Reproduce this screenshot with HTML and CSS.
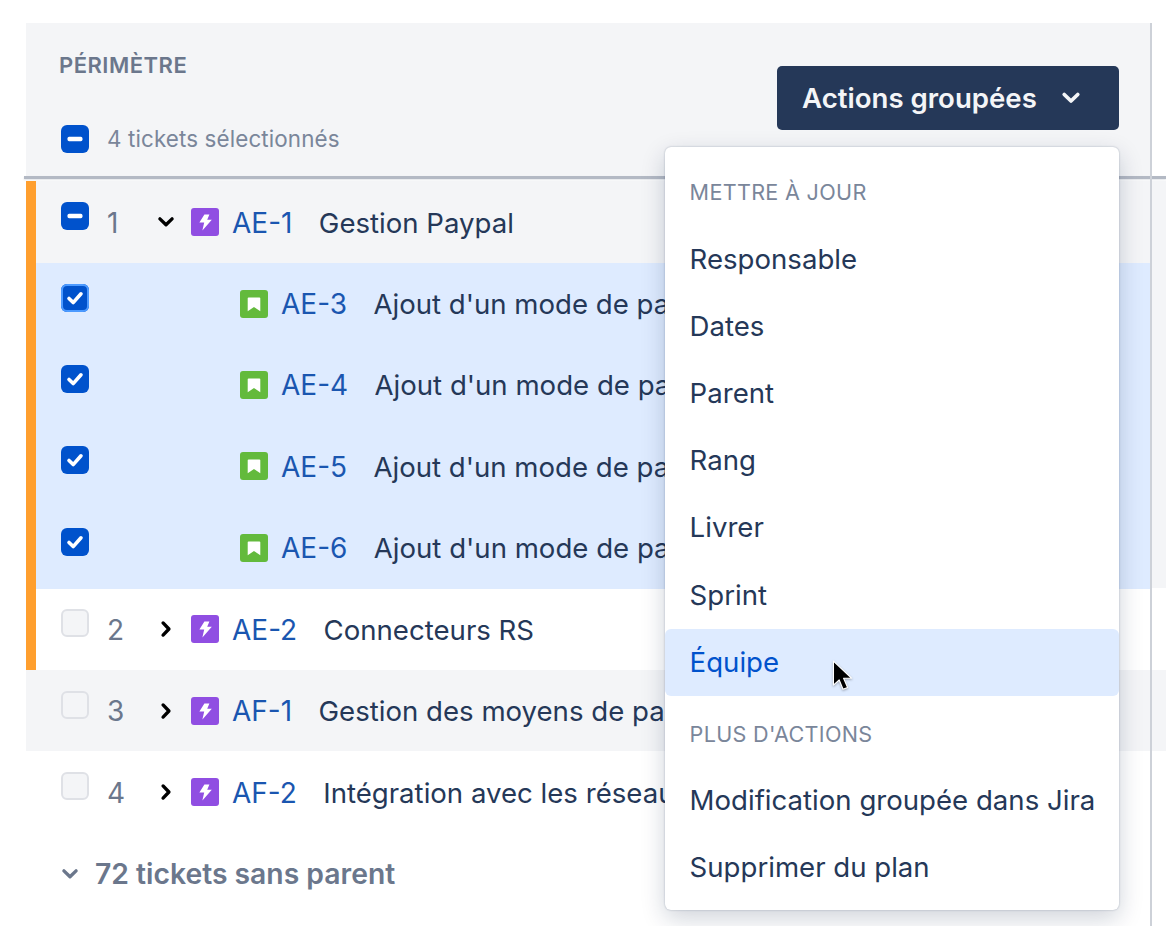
FILE: index.html
```html
<!DOCTYPE html>
<html lang="fr">
<head>
<meta charset="utf-8">
<title>Périmètre</title>
<link rel="stylesheet" href="styles.css">
</head>
<body>
<svg class="defs" width="0" height="0" aria-hidden="true">
  <symbol id="epic" viewBox="0 0 28 28"><rect width="28" height="28" rx="3" fill="#904ee2"/><path d="M13.4 6.4h5l-2.2 5.4h4.6L11.4 22.4l1.8-7.8H8.4z" fill="#fff"/></symbol>
  <symbol id="story" viewBox="0 0 28 28"><rect width="28" height="28" rx="3" fill="#63ba3c"/><path d="M8.6 7.4h10.8a.9.9 0 0 1 .9.9v13l-6.3-4.2-6.3 4.2v-13a.9.9 0 0 1 .9-.9z" fill="#fff"/></symbol>
  <symbol id="down" viewBox="0 0 16 16"><path d="M2.6 5.2 8 10.4l5.4-5.2" fill="none" stroke="currentColor" stroke-width="3" stroke-linecap="round" stroke-linejoin="round"/></symbol>
  <symbol id="right" viewBox="0 0 16 16"><path d="M5.4 2.6 10.6 8l-5.2 5.4" fill="none" stroke="currentColor" stroke-width="3" stroke-linecap="round" stroke-linejoin="round"/></symbol>
  <symbol id="check" viewBox="0 0 28 28"><path d="M8 14.4l4.2 4.2L20 9.8" fill="none" stroke="#fff" stroke-width="3.6" stroke-linecap="round" stroke-linejoin="round"/></symbol>
  <symbol id="dash" viewBox="0 0 28 28"><rect x="6.5" y="11.8" width="15" height="4.4" rx="1.6" fill="#fff"/></symbol>
</svg>

<main class="page">
  <section class="panel">
    <header class="head">
      <div class="head-left">
        <h2 class="title">PÉRIMÈTRE</h2>
        <div class="selected">
          <span class="box on"><svg><use href="#dash"/></svg></span>
          <span class="selected-text">4 tickets sélectionnés</span>
        </div>
      </div>
      <button class="bulk"><span>Actions groupées</span><svg class="bulk-chev"><use href="#down"/></svg></button>
    </header>
    <div class="rule"></div>

    <div class="rows">
      <div class="flag"></div>
      <div class="row grey">
        <span class="box on"><svg><use href="#dash"/></svg></span>
        <span class="num">1</span>
        <svg class="chev"><use href="#down"/></svg>
        <svg class="type"><use href="#epic"/></svg>
        <a class="key">AE-1</a><span class="name">Gestion Paypal</span>
      </div>
      <div class="row sel child">
        <span class="box on focus"><svg><use href="#check"/></svg></span>
        <svg class="type"><use href="#story"/></svg>
        <a class="key">AE-3</a><span class="name">Ajout d'un mode de pa</span>
      </div>
      <div class="row sel child">
        <span class="box on"><svg><use href="#check"/></svg></span>
        <svg class="type"><use href="#story"/></svg>
        <a class="key">AE-4</a><span class="name">Ajout d'un mode de pa</span>
      </div>
      <div class="row sel child">
        <span class="box on"><svg><use href="#check"/></svg></span>
        <svg class="type"><use href="#story"/></svg>
        <a class="key">AE-5</a><span class="name">Ajout d'un mode de pa</span>
      </div>
      <div class="row sel child">
        <span class="box on"><svg><use href="#check"/></svg></span>
        <svg class="type"><use href="#story"/></svg>
        <a class="key">AE-6</a><span class="name">Ajout d'un mode de pa</span>
      </div>
      <div class="row">
        <span class="box"></span>
        <span class="num">2</span>
        <svg class="chev"><use href="#right"/></svg>
        <svg class="type"><use href="#epic"/></svg>
        <a class="key">AE-2</a><span class="name">Connecteurs RS</span>
      </div>
      <div class="row grey wide">
        <span class="box"></span>
        <span class="num">3</span>
        <svg class="chev"><use href="#right"/></svg>
        <svg class="type"><use href="#epic"/></svg>
        <a class="key">AF-1</a><span class="name">Gestion des moyens de pa</span>
      </div>
      <div class="row">
        <span class="box"></span>
        <span class="num">4</span>
        <svg class="chev"><use href="#right"/></svg>
        <svg class="type"><use href="#epic"/></svg>
        <a class="key">AF-2</a><span class="name">Intégration avec les réseau</span>
      </div>
    </div>

    <div class="orphans">
      <svg class="orph-chev"><use href="#down"/></svg>
      <span>72 tickets sans parent</span>
    </div>
  </section>

  <nav class="menu">
    <div class="menu-label first">METTRE À JOUR</div>
    <div class="item">Responsable</div>
    <div class="item">Dates</div>
    <div class="item">Parent</div>
    <div class="item">Rang</div>
    <div class="item">Livrer</div>
    <div class="item">Sprint</div>
    <div class="item hover">Équipe</div>
    <div class="menu-label">PLUS D'ACTIONS</div>
    <div class="item">Modification groupée dans Jira</div>
    <div class="item">Supprimer du plan</div>
  </nav>

  <svg class="cursor" viewBox="0 0 24 34" aria-hidden="true"><path d="M1.5 1v25l6-5.4 4 9.8 4.8-2-4.2-9.6h8.4z" fill="#000" stroke="#fff" stroke-width="1.2" stroke-linejoin="round"/></svg>
</main>
</body>
</html>
```
FILE: styles.css
```css
* { box-sizing: border-box; }
html, body { margin: 0; height: 100%; background: #fff; }
body { font-family: Inter, "Liberation Sans", sans-serif; color: #253858; overflow: hidden; }
.defs { position: absolute; }
.page { position: relative; width: 1166px; height: 926px; overflow: hidden; padding: 23px 0 0 26px; }

.panel { position: relative; width: 1140px; height: 903px; }
.panel::after { content: ""; position: absolute; left: 1124px; top: 0; bottom: 0; width: 2px; background: #cdd1d8; z-index: 1; }

.head { width: 1124px; height: 153px; background: #f4f5f7; padding: 30px 31px 0 33px; display: flex; justify-content: space-between; align-items: flex-start; }
.head-left { display: flex; flex-direction: column; }
.title { margin: 0; font-size: 22px; line-height: 24px; font-weight: 600; color: #6b778c; letter-spacing: .5px; }
.selected { display: flex; align-items: center; gap: 18px; margin-top: 48px; margin-left: 2px; }
.selected-text { font-size: 22.4px; line-height: 28px; color: #7a869a; letter-spacing: .12px; white-space: nowrap; }

.box { width: 28px; height: 28px; flex: none; border-radius: 6px; background: #f4f5f7; border: 2px solid #dfe1e6; display: block; }
.box svg { display: block; width: 28px; height: 28px; }
.box.on { background: #0052cc; border: 0; }
.box.focus { box-shadow: inset 0 0 0 2px #4c9aff; }

.bulk { width: 342px; height: 64px; margin-top: 13px; border: 0; border-radius: 5px; background: #253858; color: #f4f5f7; font: 600 27.6px/32px Inter, "Liberation Sans", sans-serif; display: flex; align-items: center; padding: 0 0 0 25px; }
.bulk-chev { width: 20px; height: 20px; margin-left: 24px; color: #f4f5f7; flex: none; }

.rule { width: 1142px; height: 3px; background: #b3b9c4; margin-left: -2px; box-shadow: 0 1px 2px rgba(9,30,66,.12); }

.rows { position: relative; margin-top: 2.4px; }
.rows::after { content: ""; position: absolute; left: 1124px; top: 0; width: 16px; height: 407px; background: #f4f5f7; }
.flag { position: absolute; left: 0; top: 0; width: 10px; height: 489px; background: #ff9f2e; z-index: 1; }
.row { width: 1124px; height: 81.43px; padding: 0 485px 0 35px; display: flex; align-items: center; background: #fff; }
.row.grey { background: #f4f5f7; }
.row.wide { width: 1140px; padding-right: 501px; }
.row.sel { background: #deebff; }
.row .box { position: relative; top: -6px; }
.row.child .type { margin-left: 151px; }

.num { width: 49px; margin-left: 18px; padding-top: 1px; font-size: 28px; line-height: 34px; color: #6b778c; flex: none; }
.chev { width: 18px; height: 18px; color: #000; margin: 0 16px 0 1px; flex: none; }
.type { width: 28px; height: 28px; flex: none; }
.key { margin-left: 13px; padding-top: 1px; font-size: 28px; line-height: 34px; color: #1a56b0; flex: none; }
.name { flex: 1; min-width: 0; overflow: hidden; margin-left: 26.4px; padding-top: 1px; font-size: 27.6px; line-height: 34px; color: #253858; white-space: nowrap; }

.orphans { display: flex; align-items: center; gap: 16px; padding: 24.6px 0 0 35px; font-size: 28.3px; line-height: 34px; font-weight: 600; color: #6b778c; }
.orph-chev { width: 18px; height: 18px; color: #6b778c; flex: none; }

.menu { position: absolute; left: 665px; top: 147px; width: 454px; height: 763px; background: #fff; border-radius: 6px; box-shadow: 0 8px 24px rgba(9,30,66,.2), 0 0 2px rgba(9,30,66,.3); padding-top: 31px; z-index: 2; }
.menu-label { font-size: 21.6px; line-height: 28px; padding-left: 24.6px; color: #7a869a; letter-spacing: .3px; margin-top: 24px; margin-bottom: 19px; }
.menu-label.first { margin-top: 0; margin-bottom: 20px; }
.item { height: 67.1px; padding: 0 0 1px 24.6px; display: flex; align-items: center; font-size: 27.6px; color: #253858; white-space: nowrap; }
.item.hover { background: #deebff; color: #0052cc; border-radius: 6px; }

.cursor { position: absolute; left: 832px; top: 659px; width: 23px; height: 35px; z-index: 3; filter: drop-shadow(0 1px 1px rgba(0,0,0,.3)); }
```
